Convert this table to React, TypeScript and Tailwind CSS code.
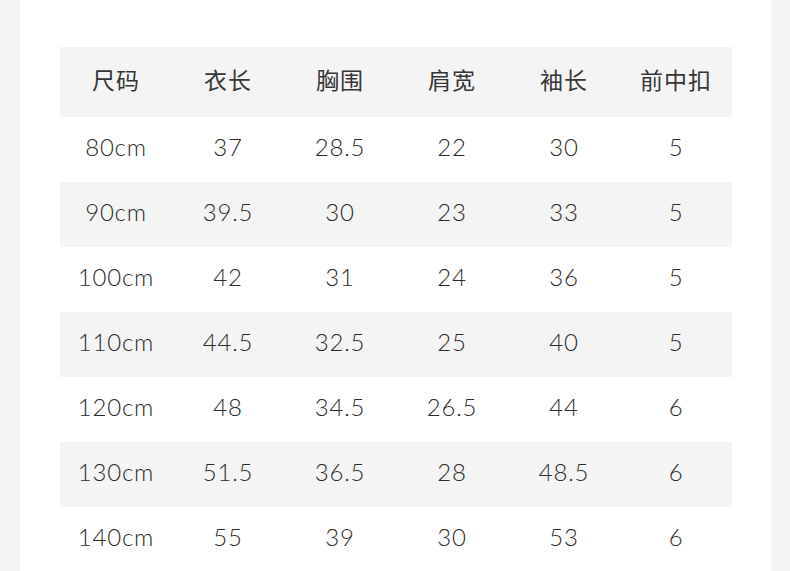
const headers = ['尺码', '衣长', '胸围', '肩宽', '袖长', '前中扣'];

const rows = [
  ['80cm', '37', '28.5', '22', '30', '5'],
  ['90cm', '39.5', '30', '23', '33', '5'],
  ['100cm', '42', '31', '24', '36', '5'],
  ['110cm', '44.5', '32.5', '25', '40', '5'],
  ['120cm', '48', '34.5', '26.5', '44', '6'],
  ['130cm', '51.5', '36.5', '28', '48.5', '6'],
  ['140cm', '55', '39', '30', '53', '6'],
];

export default function App() {
  return (
    <div className="h-[571px] w-[790px] overflow-hidden bg-[#f4f4f4]">
      <div className="ml-5 h-full w-[751px] bg-white pt-[47px] pl-10">
        <div className="w-[672px] text-[#2c2c2c] font-['Lato','Noto_Sans_CJK_SC',sans-serif] text-[24px] font-light">
          <div className="grid h-[70px] grid-cols-6 items-center bg-[#f4f4f4] pb-[6px] text-[#363636]">
            {headers.map((h) => (
              <div key={h} className="text-center font-['Noto_Sans_CJK_SC',sans-serif] text-[23px] font-normal tracking-[1px]">
                {h}
              </div>
            ))}
          </div>
          {rows.map((row, i) => (
            <div
              key={row[0]}
              className={`grid h-[65px] grid-cols-6 items-center pb-[5px] ${i % 2 === 1 ? 'bg-[#f4f4f4]' : 'bg-white'}`}
            >
              {row.map((cell, j) => (
                <div key={j} className="text-center tracking-[0.8px]">
                  {cell}
                </div>
              ))}
            </div>
          ))}
        </div>
      </div>
    </div>
  );
}
